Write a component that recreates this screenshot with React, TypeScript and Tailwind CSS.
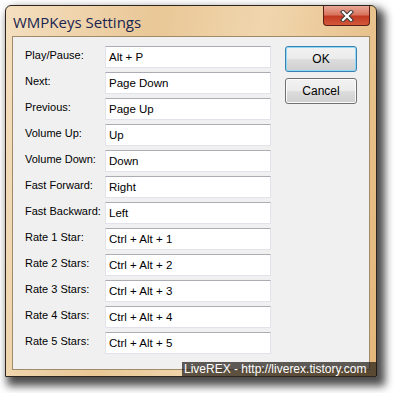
import React from 'react';

const rows: [string, string][] = [
  ['Play/Pause:', 'Alt + P'],
  ['Next:', 'Page Down'],
  ['Previous:', 'Page Up'],
  ['Volume Up:', 'Up'],
  ['Volume Down:', 'Down'],
  ['Fast Forward:', 'Right'],
  ['Fast Backward:', 'Left'],
  ['Rate 1 Star:', 'Ctrl + Alt + 1'],
  ['Rate 2 Stars:', 'Ctrl + Alt + 2'],
  ['Rate 3 Stars:', 'Ctrl + Alt + 3'],
  ['Rate 4 Stars:', 'Ctrl + Alt + 4'],
  ['Rate 5 Stars:', 'Ctrl + Alt + 5'],
];

function CloseButton() {
  return (
    <div className="mr-[6px] w-[47px] h-[20px] rounded-b-[4px] border border-[#5a1e14] border-t-0 bg-[linear-gradient(#e9a898_0%,#d9745f_45%,#c23a22_55%,#d45a3c_100%)] flex items-center justify-center">
      <svg width="14" height="12" viewBox="0 0 14 12">
        <path d="M3 2 L11 10 M11 2 L3 10" stroke="#3a3a3a" strokeWidth="4.2" strokeLinecap="square" />
        <path d="M3 2 L11 10 M11 2 L3 10" stroke="#ffffff" strokeWidth="2.2" strokeLinecap="square" />
      </svg>
    </div>
  );
}

function Button({ label, primary }: { label: string; primary?: boolean }) {
  return (
    <div
      className={`h-[26px] w-[72px] rounded-[3px] border flex items-center justify-center text-[12px] text-black ${
        primary
          ? 'border-[#3c7fb1] shadow-[inset_0_0_0_1px_#8fdaf7] bg-[linear-gradient(#f2f2f2_0%,#ebebeb_50%,#dddddd_50%,#cfcfcf_100%)]'
          : 'border-[#707070] shadow-[inset_0_0_0_1px_#fcfcfc] bg-[linear-gradient(#f2f2f2_0%,#ebebeb_50%,#dddddd_50%,#cfcfcf_100%)]'
      }`}
    >
      {label}
    </div>
  );
}

export default function App() {
  return (
    <div className="w-[394px] h-[393px] bg-white relative overflow-hidden font-['Liberation_Sans',Arial,sans-serif]">
      <div className="ml-[5px] mt-[5px] w-[372px] h-[372px] border border-[#2e261c] rounded-t-[6px] bg-[linear-gradient(100deg,#f4dfc0_0%,#e9c796_35%,#f0d6ae_60%,#e4b679_100%)] shadow-[5px_6px_8px_3px_rgba(0,0,0,0.7)] flex flex-col">
        {/* Title bar */}
        <div className="h-[30px] flex items-start justify-between">
          <span className="ml-[7px] mt-[5px] text-[15px] text-[#1b2450] font-['Open_Sans',sans-serif]">WMPKeys Settings</span>
          <CloseButton />
        </div>

        {/* Client area */}
        <div className="mx-[6px] mb-[6px] flex-1 bg-[#f0f0f0] border border-[#a08a68] flex pt-[9px] pl-[12px]">
          <div className="grid grid-cols-[80px_166px] gap-y-[4px] auto-rows-[22px] text-[11px] text-black">
            {rows.map(([label, value]) => (
              <React.Fragment key={label}>
                <div className="pt-[1px] leading-[16px]">{label}</div>
                <div className="bg-white border border-[#e2e3ea] border-t-[#abadb3] pt-[3px] pl-[3px] text-[11.5px] leading-[14px]">
                  {value}
                </div>
              </React.Fragment>
            ))}
          </div>
          <div className="ml-[14px] flex flex-col gap-[6px]">
            <Button label="OK" primary />
            <Button label="Cancel" />
          </div>
        </div>
      </div>

      {/* Watermark */}
      <div className="absolute left-[182px] top-[362px] w-[195px] h-[14px] bg-[rgba(30,25,20,0.7)] text-white text-[12px] leading-[14px] pl-[2px] whitespace-nowrap">
        LiveREX - http://liverex.tistory.com
      </div>
    </div>
  );
}
